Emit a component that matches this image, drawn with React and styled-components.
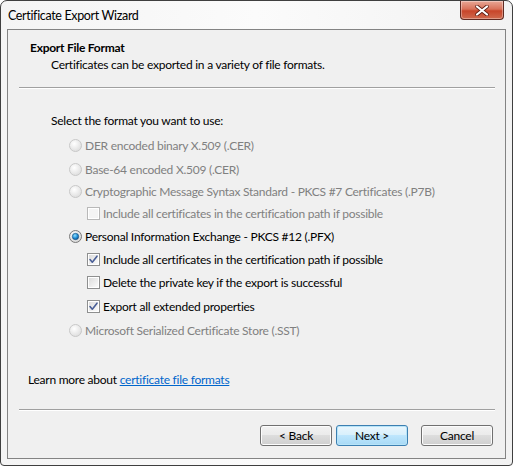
import React from 'react'
import styled, { createGlobalStyle } from 'styled-components'

const Global = createGlobalStyle`
  html, body { margin: 0; padding: 0; background: #ffffff; }
  * { box-sizing: border-box; }
`

const FONT = `Lato, "Noto Sans", sans-serif`

const Window = styled.div`
  width: 513px;
  height: 466px;
  border: 1px solid #3f3f3f;
  border-radius: 7px 7px 4px 4px;
  background: linear-gradient(90deg, #f4f4f4 0%, #fbfbfb 50%, #f2f2f2 100%);
  display: flex;
  flex-direction: column;
  font-family: ${FONT};
  font-size: 12px;
  letter-spacing: -0.25px;
  color: #000;
  overflow: hidden;
`

const TitleBar = styled.div`
  height: 28px;
  display: flex;
  align-items: flex-start;
  padding-left: 7px;
`

const Title = styled.div`
  padding-top: 7px;
  font-size: 12.5px;
  letter-spacing: -0.35px;
  color: #000;
`

const CloseButton = styled.div`
  margin-left: auto;
  margin-right: 8px;
  width: 44px;
  height: 19px;
  border: 1px solid #5f2a22;
  border-top: none;
  border-radius: 0 0 4px 4px;
  background: linear-gradient(180deg, #e8a796 0%, #d8725a 45%, #c8452a 55%, #d06a4e 100%);
  box-shadow: inset 0 0 0 1px rgba(255, 255, 255, 0.35);
  display: flex;
  align-items: center;
  justify-content: center;
`

const Panel = styled.div`
  margin: 0 6px;
  height: 430px;
  border: 1px solid #838383;
  background: #f0f0f0;
  display: flex;
  flex-direction: column;
`

const Header = styled.div`
  padding: 10px 0 0 22px;
  height: 57px;
`

const HeaderTitle = styled.div`
  font-weight: bold;
  line-height: 16px;
`

const HeaderText = styled.div`
  padding-left: 21px;
  line-height: 17px;
`

const Rule = styled.div`
  margin: 0 10px 0 11px;
  height: 2px;
  border-top: 1px solid #a0a0a0;
  border-bottom: 1px solid #ffffff;
`

const Body = styled.div`
  padding: 23px 0 0 43px;
  height: 280px;
  display: flex;
  flex-direction: column;
`

const Prompt = styled.div`
  line-height: 18px;
  margin-bottom: 4px;
`

const OptionRow = styled.div`
  display: flex;
  align-items: center;
  height: ${p => p.$h}px;
  padding-left: ${p => (p.$indent ? 36 : 18)}px;
  color: ${p => (p.$disabled ? '#808080' : '#000')};
  gap: 3px;
  flex-shrink: 0;
`

const Learn = styled.div`
  height: 44px;
  padding: 6px 0 0 20px;
`

const Link = styled.a`
  color: #0066cc;
  text-decoration: underline;
`

const Footer = styled.div`
  height: 47px;
  display: flex;
  justify-content: flex-end;
  align-items: flex-start;
  padding: 14px 12px 0 0;
`

const Button = styled.div`
  width: 72px;
  height: 21px;
  margin-left: ${p => p.$gap || 0}px;
  border: 1px solid ${p => (p.$default ? '#3c7fb1' : '#707070')};
  border-radius: 3px;
  background: ${p =>
    p.$default
      ? 'linear-gradient(180deg, #eaf6fd 0%, #d9f0fc 45%, #bee6fd 50%, #a7d9f5 100%)'
      : 'linear-gradient(180deg, #f2f2f2 0%, #ebebeb 45%, #dddddd 50%, #cfcfcf 100%)'};
  box-shadow: inset 0 0 0 1px ${p => (p.$default ? '#b7e4f8' : '#fcfcfc')};
  display: flex;
  align-items: center;
  justify-content: center;
  line-height: 1;
`

const Radio = ({ checked, disabled }) => (
  <svg width="13" height="13" viewBox="0 0 13 13">
    <defs>
      <radialGradient id={checked ? 'rg-on' : 'rg-off'} cx="0.4" cy="0.35" r="0.7">
        <stop offset="0" stopColor="#ffffff" />
        <stop offset="1" stopColor={disabled ? '#dcdcdc' : '#d4d4d4'} />
      </radialGradient>
      <radialGradient id="dot" cx="0.4" cy="0.35" r="0.7">
        <stop offset="0" stopColor="#8fe0ff" />
        <stop offset="0.6" stopColor="#1c8ad4" />
        <stop offset="1" stopColor="#0b4f8a" />
      </radialGradient>
    </defs>
    <circle cx="6.5" cy="6.5" r="6" fill={`url(#${checked ? 'rg-on' : 'rg-off'})`} stroke={disabled ? '#c8c8c8' : '#7a7a7a'} />
    {checked && <circle cx="6.5" cy="6.5" r="3.2" fill="url(#dot)" stroke="#1a4f7a" strokeWidth="0.6" />}
  </svg>
)

const Check = ({ checked, disabled }) => (
  <svg width="13" height="13" viewBox="0 0 13 13">
    <defs>
      <linearGradient id="cbg" x1="0" y1="0" x2="1" y2="1">
        <stop offset="0" stopColor="#dcdcdc" />
        <stop offset="1" stopColor="#fbfbfb" />
      </linearGradient>
    </defs>
    <rect x="0.5" y="0.5" width="12" height="12" fill="#fff" stroke={disabled ? '#b8b8b8' : '#8e8f8f'} />
    <rect x="2" y="2" width="9" height="9" fill={disabled ? '#f4f4f4' : 'url(#cbg)'} />
    {checked && (
      <path d="M3 6.5 L5.3 9.2 L10 3.2" fill="none" stroke="#4a5f97" strokeWidth="1.6" strokeLinecap="round" strokeLinejoin="round" />
    )}
  </svg>
)

const options = [
  { kind: 'radio', label: 'DER encoded binary X.509 (.CER)', disabled: true, h: 24 },
  { kind: 'radio', label: 'Base-64 encoded X.509 (.CER)', disabled: true, h: 23 },
  { kind: 'radio', label: 'Cryptographic Message Syntax Standard - PKCS #7 Certificates (.P7B)', disabled: true, h: 21 },
  { kind: 'check', label: 'Include all certificates in the certification path if possible', disabled: true, h: 24 },
  { kind: 'radio', label: 'Personal Information Exchange - PKCS #12 (.PFX)', checked: true, h: 22 },
  { kind: 'check', label: 'Include all certificates in the certification path if possible', checked: true, h: 23 },
  { kind: 'check', label: 'Delete the private key if the export is successful', h: 24 },
  { kind: 'check', label: 'Export all extended properties', checked: true, h: 24 },
  { kind: 'radio', label: 'Microsoft Serialized Certificate Store (.SST)', disabled: true, h: 24 },
]

function App() {
  return (
    <>
      <Global />
      <Window>
        <TitleBar>
          <Title>Certificate Export Wizard</Title>
          <CloseButton>
            <svg width="14" height="11" viewBox="0 0 14 11">
              <path d="M2 1.5 L12 9.5 M12 1.5 L2 9.5" stroke="#5a1a10" strokeWidth="3.6" strokeLinecap="round" />
              <path d="M2 1.5 L12 9.5 M12 1.5 L2 9.5" stroke="#ffffff" strokeWidth="2.2" strokeLinecap="round" />
            </svg>
          </CloseButton>
        </TitleBar>
        <Panel>
          <Header>
            <HeaderTitle>Export File Format</HeaderTitle>
            <HeaderText>Certificates can be exported in a variety of file formats.</HeaderText>
          </Header>
          <Rule />
          <Body>
            <Prompt>Select the format you want to use:</Prompt>
            {options.map((o, i) => (
              <OptionRow key={i} $indent={o.kind === 'check'} $disabled={o.disabled} $h={o.h}>
                {o.kind === 'radio' ? (
                  <Radio checked={o.checked} disabled={o.disabled} />
                ) : (
                  <Check checked={o.checked} disabled={o.disabled} />
                )}
                <span>{o.label}</span>
              </OptionRow>
            ))}
          </Body>
          <Learn>
            Learn more about <Link>certificate file formats</Link>
          </Learn>
          <Rule />
          <Footer>
            <Button>&lt; Back</Button>
            <Button $default $gap={4}>Next &gt;</Button>
            <Button $gap={13}>Cancel</Button>
          </Footer>
        </Panel>
      </Window>
    </>
  )
}

export default App
